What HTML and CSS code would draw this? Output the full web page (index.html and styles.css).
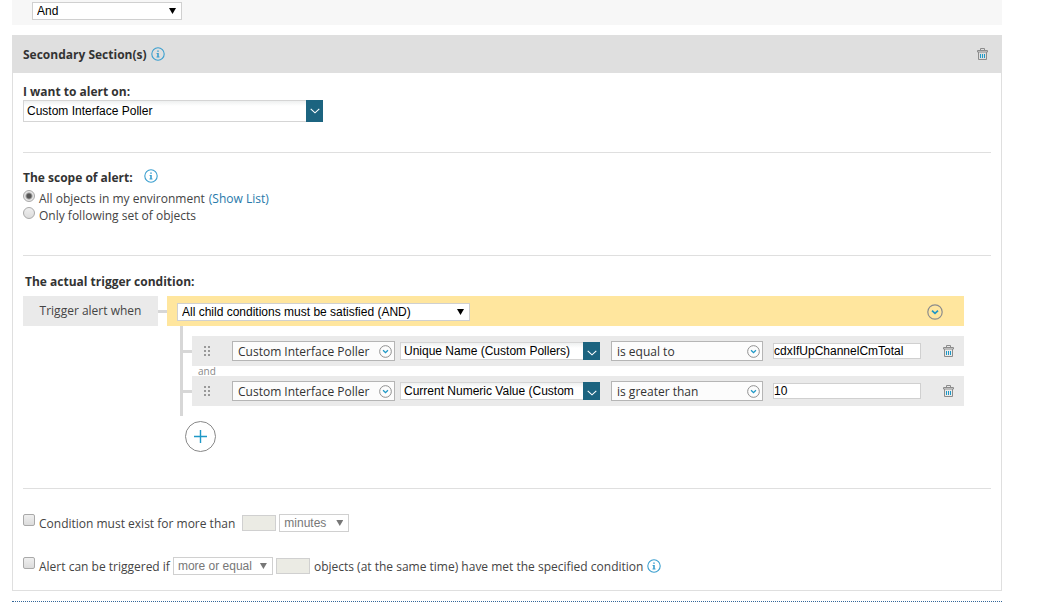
FILE: index.html
```html
<!DOCTYPE html>
<html lang="en">
<head>
<meta charset="UTF-8">
<meta name="viewport" content="width=device-width, initial-scale=1.0">
<title>Trigger Condition</title>
<link rel="stylesheet" href="styles.css">
</head>
<body>

<!-- shared icons -->
<svg class="sprite" aria-hidden="true">
  <symbol id="info" viewBox="0 0 14 14">
    <circle cx="7" cy="7" r="6.2" fill="none" stroke="#3a9fcf" stroke-width="1.1"/>
    <path d="M6.2 3.5h1.6v1.3H6.2zM5.6 6h2.2v3.6h.7v.9H5.5v-.9h.7V6.9h-.6z" fill="#3a9fcf"/>
  </symbol>
  <symbol id="trash" viewBox="0 0 11 12">
    <path d="M3.5 2V.5h4V2M.5 2.5h10v1.5H.5zM1.5 4v7.5h8V4" fill="none" stroke="#8c8c8c"/>
    <path d="M3.5 6v4M5.5 6v4M7.5 6v4" stroke="#1e98c6"/>
  </symbol>
  <symbol id="drop" viewBox="0 0 16 16">
    <circle cx="8" cy="8" r="7.2" fill="none" stroke="#8c8c8c" stroke-width="1.2"/>
    <path d="M5 6.6l3 2.8 3-2.8" fill="none" stroke="#1e98c6" stroke-width="1.7"/>
  </symbol>
  <symbol id="chevron" viewBox="0 0 10 6">
    <path d="M.7.8L5 4.8 9.3.8" fill="none" stroke="#fff" stroke-width="1.1"/>
  </symbol>
  <symbol id="grip" viewBox="0 0 6 10">
    <path d="M0 0h2v2H0zM4 0h2v2H4zM0 4h2v2H0zM4 4h2v2H4zM0 8h2v2H0zM4 8h2v2H4z" fill="#999"/>
  </symbol>
</svg>

<div class="join-bar">
  <span class="select join"><select aria-label="Section operator"><option>And</option><option>Or</option></select></span>
</div>

<section class="section">
  <header class="section-head">
    <h2>Secondary Section(s)</h2>
    <svg class="info"><use href="#info"/></svg>
    <button class="icon-btn push" type="button" aria-label="Delete section"><svg class="trash"><use href="#trash"/></svg></button>
  </header>

  <div class="block alert-on">
    <label class="title" for="alert-on">I want to alert on:</label>
    <div class="combo wide">
      <input id="alert-on" type="text" value="Custom Interface Poller">
      <button type="button" aria-label="Open list"><svg><use href="#chevron"/></svg></button>
    </div>
  </div>

  <div class="block scope">
    <h3 class="title">The scope of alert: <svg class="info"><use href="#info"/></svg></h3>
    <div class="option">
      <input type="radio" name="scope" id="scope-all" checked>
      <label for="scope-all">All objects in my environment</label>
      <a href="#">(Show List)</a>
    </div>
    <div class="option">
      <input type="radio" name="scope" id="scope-set">
      <label for="scope-set">Only following set of objects</label>
    </div>
  </div>

  <div class="block trigger">
    <h3 class="title indent">The actual trigger condition:</h3>
    <div class="root">
      <div class="when">Trigger alert when</div>
      <div class="link"></div>
      <div class="group-bar">
        <span class="select group"><select aria-label="Group operator"><option>All child conditions must be satisfied (AND)</option></select></span>
        <button class="icon-btn push" type="button" aria-label="Group menu"><svg class="drop"><use href="#drop"/></svg></button>
      </div>
    </div>

    <div class="children">
      <div class="rule">
        <svg class="grip"><use href="#grip"/></svg>
        <button class="picker object" type="button">Custom Interface Poller<svg><use href="#drop"/></svg></button>
        <div class="combo">
          <input type="text" aria-label="Field" value="Unique Name (Custom Pollers)">
          <button type="button" aria-label="Open list"><svg><use href="#chevron"/></svg></button>
        </div>
        <button class="picker operator" type="button">is equal to<svg><use href="#drop"/></svg></button>
        <input class="value" type="text" aria-label="Value" value="cdxIfUpChannelCmTotal">
        <button class="icon-btn push" type="button" aria-label="Delete condition"><svg class="trash"><use href="#trash"/></svg></button>
      </div>
      <div class="joiner">and</div>
      <div class="rule">
        <svg class="grip"><use href="#grip"/></svg>
        <button class="picker object" type="button">Custom Interface Poller<svg><use href="#drop"/></svg></button>
        <div class="combo">
          <input type="text" aria-label="Field" value="Current Numeric Value (Custom">
          <button type="button" aria-label="Open list"><svg><use href="#chevron"/></svg></button>
        </div>
        <button class="picker operator" type="button">is greater than<svg><use href="#drop"/></svg></button>
        <input class="value" type="text" aria-label="Value" value="10">
        <button class="icon-btn push" type="button" aria-label="Delete condition"><svg class="trash"><use href="#trash"/></svg></button>
      </div>
    </div>
    <button class="add" type="button" aria-label="Add condition"><svg viewBox="0 0 13 13"><path d="M6.5 0v13M0 6.5h13" stroke="#1e98c6" stroke-width="1.4"/></svg></button>
  </div>

  <div class="block limits">
    <div class="limit">
      <input type="checkbox" id="sustain">
      <label for="sustain" class="spaced">Condition must exist for more than</label>
      <input class="amount" type="text" aria-label="Duration" disabled>
      <span class="select unit off"><select aria-label="Unit" disabled><option>minutes</option></select></span>
    </div>
    <div class="limit">
      <input type="checkbox" id="count">
      <label for="count">Alert can be triggered if</label>
      <span class="select compare off"><select aria-label="Comparison" disabled><option>more or equal</option></select></span>
      <input class="amount" type="text" aria-label="Object count" disabled>
      <span class="tail">objects (at the same time) have met the specified condition</span>
      <svg class="info"><use href="#info"/></svg>
    </div>
  </div>
</section>

<div class="end-line"></div>

</body>
</html>
```
FILE: styles.css
```css
* {
  box-sizing: border-box;
}

body {
  margin: 0;
  padding: 0 36px 0 12px;
  background: #fff;
  color: #444;
  font: 12px/17px "Open Sans", sans-serif;
}

h2, h3 {
  margin: 0;
}

input, select, button {
  margin: 0;
  font: 12px "Liberation Sans", Arial, sans-serif;
}

button {
  padding: 0;
  border: 0;
  background: none;
  cursor: pointer;
}

a {
  color: #2779aa;
  text-decoration: none;
}

svg {
  display: block;
  flex: none;
}

.sprite {
  position: absolute;
  width: 0;
  height: 0;
}

.info {
  width: 14px;
  height: 14px;
}

.trash {
  width: 11px;
  height: 12px;
}

.drop {
  width: 16px;
  height: 16px;
}

.push {
  margin-left: auto;
}

/* native selects with a plain triangle */
.select {
  position: relative;
  display: block;
  height: 18px;
}

.select select {
  display: block;
  width: 100%;
  height: 100%;
  padding: 0 16px 0 4px;
  appearance: none;
  border: 1px solid #d0d0d0;
  border-radius: 0;
  background: #fff;
  color: #000;
}

.select::after {
  content: "";
  position: absolute;
  right: 6px;
  top: 6px;
  width: 7px;
  height: 6px;
  background: #000;
  clip-path: polygon(0 0, 100% 0, 50% 100%);
  pointer-events: none;
}

.select.off select {
  color: #777;
  opacity: 1;
}

.select.off::after {
  background: #777;
}

.join {
  width: 150px;
}

.group {
  width: 293px;
}

.unit {
  width: 70px;
}

.compare {
  width: 100px;
}

.join-bar {
  height: 25px;
  padding: 2px 20px;
  background: #f7f7f7;
}

.section {
  margin-top: 10px;
  border: 1px solid #dfdfdf;
  border-top: 0;
}

.section-head {
  display: flex;
  align-items: center;
  gap: 4px;
  height: 38px;
  padding: 0 13px 0 10px;
  background: #dfdfdf;
}

.section-head h2,
.title {
  color: #333;
  font: 700 12px/17px "Open Sans", sans-serif;
}

.block {
  margin: 0 10px;
}

.block + .block {
  border-top: 1px solid #dfdfdf;
}

.alert-on {
  padding: 10px 0 30px;
}

.alert-on .title {
  display: block;
}

.combo {
  display: flex;
  width: 200px;
  height: 18px;
}

.combo input {
  flex: 1;
  min-width: 0;
  padding: 0 3px;
  border: 1px solid #d5d5d5;
  border-right: 0;
  background: linear-gradient(#eef0f0, #fff 5px);
  color: #000;
}

.combo button {
  display: grid;
  place-items: center;
  width: 17px;
  background: #1c6480;
}

.combo svg {
  width: 10px;
  height: 6px;
}

.rule .combo button {
  padding-top: 3px;
}

.combo.wide {
  width: 300px;
  height: 22px;
}

.scope {
  padding: 16px 0 31px;
}

.scope .title {
  display: flex;
  gap: 11px;
  margin-bottom: 4px;
}

.option {
  display: flex;
  gap: 4px;
}

.option label,
.option a {
  line-height: 18px;
  margin-bottom: -1px;
}

input[type="radio"],
input[type="checkbox"] {
  flex: none;
  width: 12px;
  height: 12px;
  appearance: none;
  border: 1px solid #a9a9a9;
  border-radius: 2px;
  background: linear-gradient(#efefef, #dcdcdc);
}

input[type="radio"] {
  border-radius: 50%;
}

input[type="radio"]:checked {
  background: radial-gradient(circle, #555 2px, #e6e6e6 4px);
}

.trigger {
  padding: 17px 27px 36px 0;
}

.indent {
  padding-left: 2px;
}

.root {
  display: flex;
  align-items: center;
  height: 30px;
  margin-top: 6px;
}

.when {
  width: 135px;
  height: 30px;
  background: #eaeaea;
  line-height: 30px;
  text-align: center;
}

.link {
  width: 9px;
  height: 3px;
  background: #d7d7d7;
}

.group-bar {
  display: flex;
  flex: 1;
  align-items: center;
  height: 30px;
  padding: 2px 21px 0 10px;
  background: #ffe69e;
}

.children {
  margin-left: 157px;
  padding: 10px 0 10px 9px;
  border-left: 3px solid #d7d7d7;
}

.rule {
  position: relative;
  display: flex;
  align-items: center;
  height: 30px;
  padding: 0 10px 0 12px;
  background: #eaeaea;
}

.rule::before {
  content: "";
  position: absolute;
  left: -9px;
  top: 14px;
  width: 9px;
  height: 3px;
  background: #d7d7d7;
}

.grip {
  width: 6px;
  height: 10px;
  margin-right: 22px;
}

.picker {
  display: flex;
  align-items: center;
  justify-content: space-between;
  height: 20px;
  padding: 0 2px 0 5px;
  border: 1px solid #b5b5b5;
  background: #fcfcfc;
  color: #333;
  font: 12px/17px "Open Sans", sans-serif;
}

.picker svg {
  width: 13px;
  height: 13px;
}

.object {
  width: 163px;
  margin-right: 5px;
}

.operator {
  width: 152px;
  margin: 0 10px 0 11px;
}

.value {
  width: 148px;
  height: 16px;
  padding: 0;
  border: 1px solid #d0d0d0;
  background: #fff;
  color: #000;
}

.joiner {
  height: 10px;
  padding-left: 6px;
  color: #888;
  font-size: 10px;
  line-height: 10px;
}

.add {
  display: grid;
  place-items: center;
  width: 31px;
  height: 31px;
  margin: 5px 0 0 162px;
  border: 1px solid #888;
  border-radius: 50%;
}

.add svg {
  width: 13px;
  height: 13px;
}

.limits {
  padding: 25px 0 15px;
}

.limit {
  display: flex;
  align-items: center;
  gap: 3px;
  height: 18px;
}

.limit + .limit {
  margin-top: 25px;
}

.limit input[type="checkbox"] {
  align-self: flex-start;
  margin-right: 1px;
}

.spaced {
  margin-right: 4px;
}

.tail {
  margin: 0 1px;
}

.amount {
  width: 34px;
  height: 16px;
  border: 1px solid #d0d0d0;
  background: #ebebe4;
}

.end-line {
  margin-top: 10px;
  border-top: 1px dotted #336699;
}
```
